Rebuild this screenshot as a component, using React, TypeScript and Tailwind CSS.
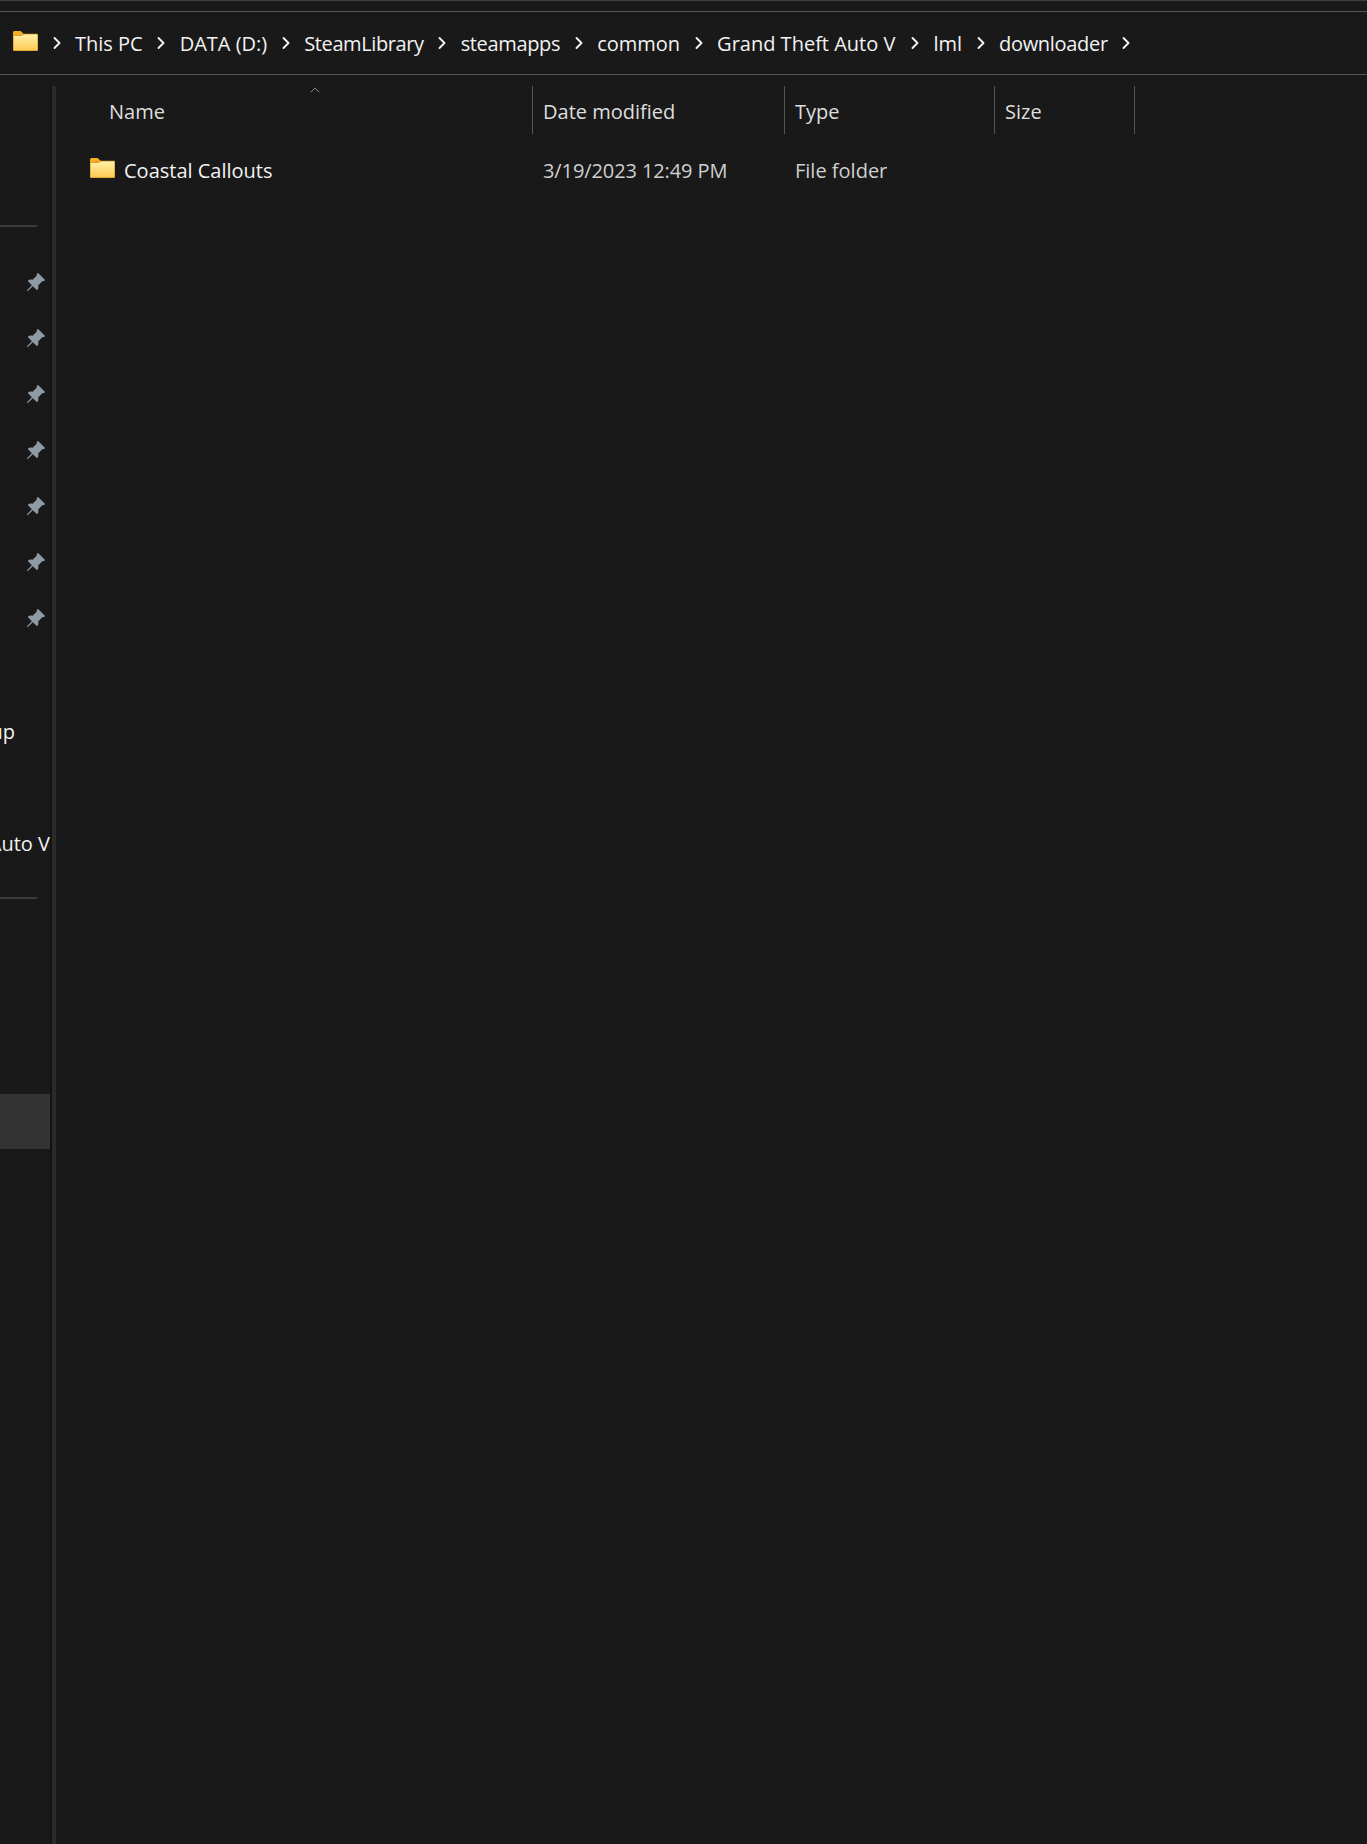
import { useId } from "react";
import { ChevronRight, ChevronUp } from "lucide-react";
import { BsPinAngleFill } from "react-icons/bs";

const crumbs = [
    { label: "This PC", cls: "" },
    { label: "DATA (D:)", cls: "" },
    { label: "SteamLibrary", cls: "tracking-[-0.4px]" },
    { label: "steamapps", cls: "tracking-[-0.35px]" },
    { label: "common", cls: "" },
    { label: "Grand Theft Auto V", cls: "mr-[1px]" },
    { label: "lml", cls: "" },
    { label: "downloader", cls: "tracking-[-0.3px]" },
];

function FolderIcon() {
    const id = useId();
    return (
        <svg width="25" height="20" viewBox="0 0 25 20" className="shrink-0 mb-[5px]">
            <defs>
                <linearGradient id={id} x1="0" y1="0" x2="0" y2="1">
                    <stop offset="0" stopColor="#fff0a8" />
                    <stop offset="1" stopColor="#fccb52" />
                </linearGradient>
            </defs>
            <path d="M0 1.5A1.5 1.5 0 0 1 1.5 0h6L11 3v3H0z" fill="#f5b021" />
            <path d="M0 5a1 1 0 0 1 1-1.2h7L11 2.8h13a1 1 0 0 1 1 1V19a1 1 0 0 1-1 1H1a1 1 0 0 1-1-1z" fill="#dca02c" />
            <path d="M.7 5h7.6L11 3.6h12.8a.5.5 0 0 1 .5.5V18.7a.6.6 0 0 1-.6.6H1.3a.6.6 0 0 1-.6-.6z" fill={`url(#${id})`} />
        </svg>
    );
}

function SidebarRow({ label, pinned }: { label?: string; pinned?: boolean }) {
    return (
        <div className="h-[56px] flex items-center justify-end shrink-0">
            {pinned && <BsPinAngleFill size={21} className="text-[#8f9ba4] mr-[4px] shrink-0" />}
            {label && <span className="whitespace-nowrap pt-[4px]">{label}</span>}
        </div>
    );
}

export default function App() {
    return (
        <div className="w-[1367px] h-[1844px] bg-[#191919] text-white flex flex-col overflow-hidden font-['Open_Sans',sans-serif] text-[20px]">
            <div className="h-[1px] bg-[#3d3d3d] shrink-0" />
            <div className="h-[64px] mt-[10px] border-y border-[#555555] flex items-center pl-[13px] shrink-0 text-[#f2f2f2]">
                <FolderIcon />
                {crumbs.map((crumb) => (
                    <div key={crumb.label} className="flex items-center">
                        <div className="w-[37px] flex justify-center">
                            <ChevronRight size={20} strokeWidth={2.25} />
                        </div>
                        <span className={`whitespace-nowrap pt-[2px] ${crumb.cls}`}>{crumb.label}</span>
                    </div>
                ))}
                <div className="w-[37px] flex justify-center">
                    <ChevronRight size={20} strokeWidth={2.25} />
                </div>
            </div>

            <div className="flex flex-1 min-h-0">
                <aside className="w-[50px] overflow-hidden flex flex-col shrink-0 pt-[150px] text-[#f2f2f2]">
                    <div className="h-[2px] w-[37px] bg-[#3a3a3a] shrink-0 mb-[27px]" />
                    <SidebarRow pinned />
                    <SidebarRow pinned />
                    <SidebarRow pinned />
                    <SidebarRow pinned />
                    <SidebarRow pinned />
                    <SidebarRow pinned />
                    <SidebarRow pinned />
                    <SidebarRow />
                    <div className="mr-[35px]">
                        <SidebarRow label="Backup" />
                    </div>
                    <SidebarRow />
                    <SidebarRow label="Grand Theft Auto V" />
                    <div className="h-[2px] w-[37px] bg-[#3a3a3a] shrink-0 mt-[27px]" />
                    <div className="h-[55px] bg-[#333333] mt-[195px] shrink-0" />
                </aside>
                <div className="w-[2px] mt-[11px] bg-[#131313] shrink-0" />
                <div className="w-[4px] mt-[11px] bg-[#2a2a2a] shrink-0" />

                <main className="flex-1 pt-[11px] relative pl-[1px]">
                    <ChevronUp size={16} strokeWidth={1} className="absolute left-[251px] top-[7px] text-[#c0c0c0]" />
                    <div className="flex h-[48px] items-center text-[#dedede]">
                        <div className="w-[475px] pl-[52px] pt-[4px]">Name</div>
                        <div className="w-[252px] h-full flex items-center border-l border-[#555555] pl-[10px] pt-[4px]">Date modified</div>
                        <div className="w-[210px] h-full flex items-center border-l border-[#555555] pl-[10px] pt-[4px]">Type</div>
                        <div className="w-[141px] h-full flex items-center border-x border-[#555555] pl-[10px] pt-[4px]">Size</div>
                    </div>
                    <div className="flex h-[56px] mt-[8px] items-center">
                        <div className="w-[475px] pl-[33px] flex items-center gap-[9px] text-[#f2f2f2]">
                            <FolderIcon />
                            <span className="pt-[2px]">Coastal Callouts</span>
                        </div>
                        <div className="w-[252px] pl-[11px] pt-[2px] text-[#cfcfcf] tracking-[-0.1px]">3/19/2023 12:49 PM</div>
                        <div className="w-[210px] pl-[11px] pt-[2px] text-[#cfcfcf]">File folder</div>
                    </div>
                </main>
            </div>
        </div>
    );
}
